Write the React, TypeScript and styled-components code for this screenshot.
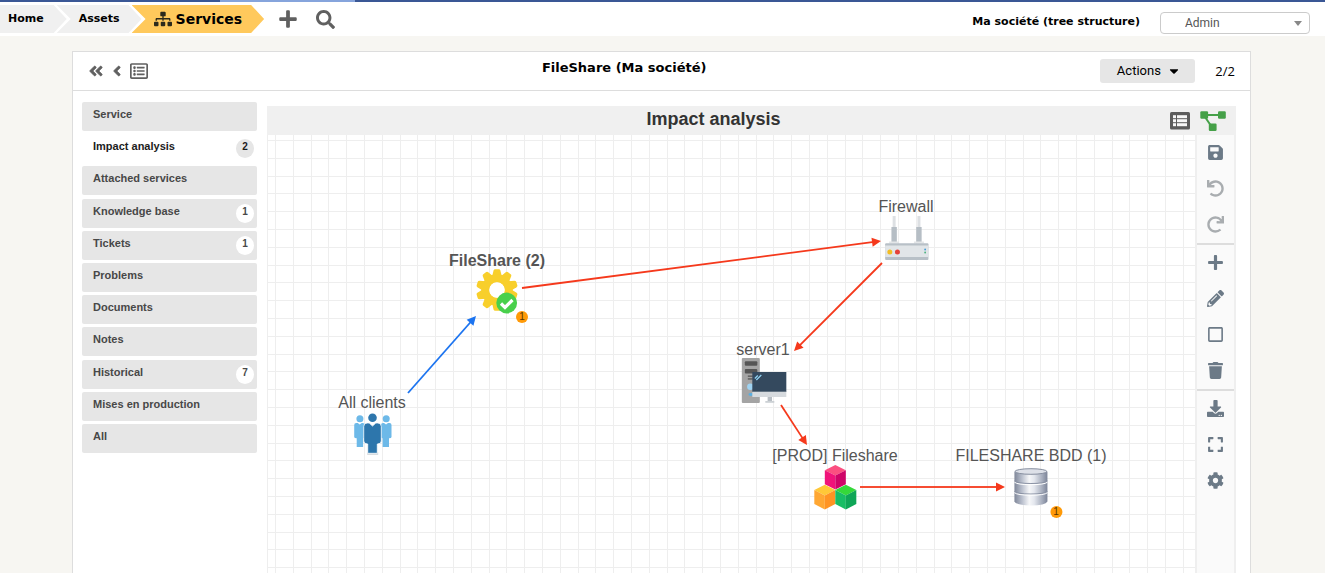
import React from 'react';
import styled, { createGlobalStyle } from 'styled-components';
import {
  FaSitemap, FaPlus, FaSearch, FaAngleDoubleLeft, FaAngleLeft, FaRegListAlt, FaCaretDown,
  FaSave, FaUndo, FaRedo, FaPencilAlt, FaRegSquare, FaTrash,
  FaDownload, FaExpand, FaCog,
} from 'react-icons/fa';

const GlobalStyle = createGlobalStyle`
  * { box-sizing: border-box; }
  body { margin: 0; background: #f7f6f2; color: #000; font-family: "Liberation Sans", Arial, sans-serif; }
  button { border: 0; padding: 0; background: none; font: inherit; color: inherit; cursor: pointer; }
  a { color: inherit; text-decoration: none; }
  ul { list-style: none; margin: 0; padding: 0; }
  h1, h2 { margin: 0; }
  svg { display: block; flex: none; }
`;

const verdana = '"DejaVu Sans", Verdana, sans-serif';

const Page = styled.div`
  display: flex;
  flex-direction: column;
  height: 100vh;
  overflow: hidden;
`;

const Strip = styled.div`
  flex: none;
  height: 2px;
  background: linear-gradient(to right, #3a5795 220px, #86a4dc 220px, #86a4dc 355px, #3a5795 355px);
`;

const TopBar = styled.header`
  flex: none;
  display: flex;
  align-items: center;
  height: 34px;
  padding-right: 15px;
  background: #fff;
`;

const Breadcrumb = styled.nav`
  display: flex;
  align-items: center;
`;

const Crumb = styled.a<{ $first?: boolean; $active?: boolean }>`
  display: flex;
  align-items: center;
  gap: 4px;
  height: 28px;
  margin-left: ${(p) => (p.$first ? 0 : '-10px')};
  padding: ${(p) => (p.$first ? '0 23px 0 8px' : '0 22px')};
  background: ${(p) => (p.$active ? '#ffc95c' : '#f0f0f0')};
  font: bold ${(p) => (p.$active ? 14 : 11)}px/26px ${verdana};
  clip-path: polygon(0 0, calc(100% - 13px) 0, 100% 50%, calc(100% - 13px) 100%, 0 100%, ${(p) => (p.$first ? '0' : '14px')} 50%);
`;

const TopActions = styled.div`
  display: flex;
  align-items: center;
  gap: 18px;
  margin-left: 14px;
  color: #606060;
`;

const Entity = styled.a`
  margin: 6px 20px 0 auto;
  font: bold 11px/16px ${verdana};
`;

const ProfileBox = styled.div`
  position: relative;
  width: 150px;
  margin-top: 8px;
  color: #888;
`;

const ProfileSelect = styled.select`
  appearance: none;
  display: block;
  width: 100%;
  height: 22px;
  padding: 0 24px;
  border: 1px solid #cbcbcb;
  border-radius: 4px;
  background: #fff;
  color: #555;
  font: 12px/20px Roboto, sans-serif;
`;

const Triangle = styled.span`
  position: absolute;
  right: 8px;
  top: 9px;
  border: 4px solid transparent;
  border-top: 5px solid #888;
  border-bottom: 0;
  pointer-events: none;
`;

const Card = styled.main`
  flex: 1;
  display: flex;
  flex-direction: column;
  margin: 15px 74px 0 72px;
  border: 1px solid #ddd;
  border-bottom: 0;
  background: #fff;
`;

const CardHeader = styled.div`
  flex: none;
  display: grid;
  grid-template-columns: auto 1fr auto;
  align-items: center;
  height: 39px;
  padding: 0 15px;
  border-bottom: 1px solid #ddd;
`;

const Pager = styled.div`
  display: flex;
  align-items: center;
  gap: 5px;
  color: #606060;
`;

const CardTitle = styled.h1`
  padding-bottom: 7px;
  text-align: center;
  font: bold 13px/18px ${verdana};
`;

const HeaderRight = styled.div`
  display: flex;
  align-items: center;
  gap: 20px;
  font: 13px/16px "Open Sans", sans-serif;
`;

const ActionsButton = styled.button`
  display: flex;
  align-items: center;
  justify-content: center;
  gap: 6px;
  width: 95px;
  height: 24px;
  padding-left: 2px;
  border-radius: 3px;
  background: #e6e6e6;
  font: 13px/16px Roboto, sans-serif;
`;

const CardBody = styled.div`
  flex: 1;
  display: flex;
  gap: 10px;
  padding: 11px 14px 0 9px;
`;

const Tabs = styled.ul`
  flex: none;
  display: flex;
  flex-direction: column;
  justify-content: space-between;
  width: 175px;
  height: 351px;
`;

const Tab = styled.a<{ $active?: boolean }>`
  display: flex;
  justify-content: space-between;
  height: 29px;
  padding: 0 3px 0 11px;
  border-radius: 2px;
  background: ${(p) => (p.$active ? '#fff' : '#e6e6e6')};
  color: ${(p) => (p.$active ? '#1c1c1c' : '#484848')};
  font-size: 11px;
  font-weight: bold;
  line-height: 25px;
`;

const TabCount = styled.span<{ $active?: boolean }>`
  width: 18px;
  height: 19px;
  margin-top: 5px;
  border-radius: 50%;
  background: ${(p) => (p.$active ? '#e6e6e6' : '#fff')};
  text-align: center;
  font-size: 10px;
  line-height: 16px;
`;

const Panel = styled.section`
  flex: 1;
  display: flex;
  flex-direction: column;
  margin-top: 4px;
  min-width: 0;
`;

const PanelHeader = styled.div`
  flex: none;
  display: flex;
  align-items: center;
  gap: 10px;
  height: 29px;
  padding-right: 10px;
  background: #f0f0f0;
  color: #555;
`;

const PanelTitle = styled.h2`
  flex: 1;
  padding-bottom: 3px;
  color: #333;
  text-align: center;
  font-size: 18px;
  line-height: 22px;
`;

const ViewButton = styled.button<{ $active?: boolean }>`
  color: ${(p) => (p.$active ? '#45a048' : '#5c5c5c')};
`;

const Workspace = styled.div`
  flex: 1;
  display: flex;
  border-left: 1px solid #eee;
`;

const Canvas = styled.div`
  position: relative;
  flex: 1;
  overflow: hidden;
`;

const Edges = styled.svg`
  position: absolute;
  inset: 0;
  width: 100%;
  height: 100%;
`;

const NodeBox = styled.div`
  position: absolute;
  display: flex;
  flex-direction: column;
  align-items: center;
  transform: translateX(-50%);
`;

const NodeLabel = styled.span<{ $bold?: boolean }>`
  margin-bottom: -2px;
  color: #555;
  font-size: 16px;
  font-weight: ${(p) => (p.$bold ? 'bold' : 'normal')};
  line-height: 20px;
  white-space: nowrap;
`;

const NodeIcon = styled.div`
  position: relative;
  width: 48px;
  height: 48px;
`;

const Alert = styled.span`
  position: absolute;
  left: 43px;
  top: 42px;
  width: 12px;
  height: 12px;
  border-radius: 50%;
  background: #ff9a08;
  color: #5a3500;
  text-align: center;
  font-size: 10px;
  line-height: 12px;
`;

const Toolbar = styled.div`
  flex: none;
  width: 41px;
  border: solid #efefef;
  border-width: 0 2px;
  background: #fafafa;
`;

const ToolGroup = styled.div`
  display: flex;
  flex-direction: column;
  & + & { border-top: 2px solid #ddd; }
`;

const Tool = styled.button`
  display: flex;
  align-items: center;
  justify-content: center;
  height: 36px;
  padding-bottom: 1px;
  color: #6c7a87;
  &:disabled { color: #a9adb0; }
`;

const GRID = 17.8;

function Grid() {
  return (
    <g fill="#eeeeee">
      {Array.from({ length: 120 }, (_, i) => (
        <rect key={'v' + i} x={Math.round(7 + i * GRID)} y={0} width={1} height="100%" />
      ))}
      {Array.from({ length: 60 }, (_, i) => (
        <rect key={'h' + i} x={0} y={Math.round(5 + i * GRID)} width="100%" height={1} />
      ))}
    </g>
  );
}

const RED = '#f5391c';
const BLUE = '#1c74f0';

const edges = [
  { from: [254, 153], to: [613, 106], color: RED },
  { from: [614, 128], to: [526, 216], color: RED },
  { from: [513, 270], to: [539, 310], color: RED },
  { from: [592, 352], to: [737, 352], color: RED },
  { from: [140, 258], to: [208, 181], color: BLUE },
];

function Edge({ from, to, color }: { from: number[]; to: number[]; color: string }) {
  const angle = (Math.atan2(to[1] - from[1], to[0] - from[0]) * 180) / Math.PI;
  const length = Math.hypot(to[0] - from[0], to[1] - from[1]);
  return (
    <g transform={`translate(${from[0]} ${from[1]}) rotate(${angle})`} fill={color}>
      <rect x={0} y={-0.9} width={length - 7} height={1.8} />
      <path d={`M${length} 0 l-9 -4.5 v9z`} />
    </g>
  );
}

function GraphGlyph() {
  return (
    <svg width="26" height="20" viewBox="0 0 26 20" fill="currentColor">
      <rect x="0.3" y="0.3" width="7.8" height="7.4" rx="1.2" />
      <rect x="18" y="0.3" width="7.8" height="7.4" rx="1.2" />
      <rect x="8.8" y="12.6" width="7.8" height="7.4" rx="1.2" />
      <path d="M7 4 H19 M5 6 L10.5 14" stroke="currentColor" strokeWidth="2" />
    </svg>
  );
}

function TableGlyph() {
  return (
    <svg width="20" height="18" viewBox="0 0 20 18">
      <rect width="20" height="17.5" rx="1.5" fill="currentColor" />
      <g fill="#f7f7f7">
        {[3.2, 7.2, 11.2].map((y) => (
          <g key={y}>
            <rect x="3" y={y} width="3" height="3" />
            <rect x="7" y={y} width="10" height="3" />
          </g>
        ))}
      </g>
    </svg>
  );
}

function GearArt() {
  return (
    <svg width="48" height="48" viewBox="0 0 48 48">
      <g transform="translate(24 21)" fill="#f8cf2b">
        {Array.from({ length: 10 }, (_, i) => (
          <path key={i} transform={`rotate(${i * 36})`} d="M-5 -13 L-3.4 -19.5 Q-3 -20.8 -1.8 -20.8 H1.8 Q3 -20.8 3.4 -19.5 L5 -13z" />
        ))}
        <circle r="11.7" fill="none" stroke="#f8cf2b" strokeWidth="8" />
        <circle r="7.6" fill="#fff" />
      </g>
      <circle cx="33.7" cy="34" r="10.4" fill="#49d04c" />
      <path d="M28 34.5 l4 4 l7.5 -7.5" fill="none" stroke="#fff" strokeWidth="3.2" />
    </svg>
  );
}

function PeopleArt() {
  const side = 'M0 14 q0 -2 2 -2 h1.5 l2 1.5 l2 -1.5 h1 q2 0 2 2 v12 q0 1.2 -1.6 1.2 v8.8 h-6.4 v-8.8 q-2.5 0 -2.5 -1.2z';
  return (
    <svg width="48" height="48" viewBox="0 0 48 48">
      <rect x="19" y="41" width="11" height="3" fill="#d9dde0" />
      <g fill="#6db9e8">
        <circle cx="11.7" cy="7.7" r="3.5" />
        <circle cx="38" cy="7.7" r="3.5" />
        <path d={side} transform="translate(6 0)" />
        <path d={side} transform="translate(43.3 0) scale(-1 1)" />
      </g>
      <circle cx="24.3" cy="6.7" r="4.3" fill="#2d76ac" />
      <path d="M15.5 15.5 q0 -3.5 3.5 -3.5 h2 l3.3 3 l3.3 -3 h2 q3.5 0 3.5 3.5 v14.5 q0 3 -4 3 v9.3 h-9.6 v-9.3 q-4 0 -4 -3z" fill="#2d76ac" stroke="#fff" strokeWidth="0.8" />
    </svg>
  );
}

function RouterArt() {
  return (
    <svg width="48" height="48" viewBox="0 0 48 48">
      {[11.7, 36.5].map((x) => (
        <g key={x}>
          <rect x={x - 1.5} y="1" width="3" height="12" fill="#dde0e3" />
          <rect x={x - 2.7} y="12" width="5.4" height="15" fill="#b6bec5" />
          <rect x={x - 5} y="26.5" width="10" height="2" fill="#e3e6e8" />
        </g>
      ))}
      <rect x="2.7" y="28.3" width="43.3" height="16.7" rx="1" fill="#b8c0c7" />
      <rect x="2.7" y="30.5" width="43.3" height="11.5" fill="#e1e5e8" />
      <circle cx="7.4" cy="37" r="2.5" fill="#f3bd23" />
      <circle cx="15" cy="37" r="2.5" fill="#e5423a" />
      <circle cx="42.7" cy="34.5" r="0.9" fill="#3d9ad6" />
      <circle cx="42.7" cy="37.5" r="0.9" fill="#48b07c" />
    </svg>
  );
}

function ServerArt() {
  return (
    <svg width="48" height="48" viewBox="0 0 48 48">
      <rect x="2.5" y="0" width="18" height="45" rx="1" fill="#a4a4a4" />
      <g fill="#555">
        <rect x="5.5" y="3.2" width="12.5" height="4.5" rx="1" />
        <rect x="5.5" y="11" width="12.5" height="4.5" rx="1" />
        <rect x="8.5" y="17.5" width="5" height="1.3" />
        <rect x="8.5" y="20.3" width="5" height="1.3" />
      </g>
      <circle cx="11" cy="28.7" r="3.2" fill="#9fd3f2" />
      <ellipse cx="11.5" cy="36.5" rx="2.4" ry="1.4" fill="#5aaee0" />
      <rect x="13" y="14" width="34" height="20" fill="#34495e" />
      <path d="M15.5 20.5 l3 -3 M17 22 l5 -5" stroke="#8fd0f0" strokeWidth="1.3" />
      <rect x="13" y="33.7" width="34" height="5.3" fill="#d6dade" />
      <rect x="28.3" y="39" width="4.4" height="4" fill="#b8bec4" />
      <rect x="26" y="43" width="9" height="1.8" fill="#ccd1d5" />
    </svg>
  );
}

function Cube({ x, y, top, left, right }: { x: number; y: number; top: string; left: string; right: string }) {
  return (
    <g transform={`translate(${x} ${y})`}>
      <path d="M0 0 L10.5 5.3 L0 10.6 L-10.5 5.3z" fill={top} />
      <path d="M-10.5 5.3 L0 10.6 V24.6 L-10.5 19.3z" fill={left} />
      <path d="M10.5 5.3 L0 10.6 V24.6 L10.5 19.3z" fill={right} />
    </g>
  );
}

function CubesArt() {
  return (
    <svg width="48" height="48" viewBox="0 0 48 48">
      <Cube x={24} y={1} top="#fb4f80" left="#f0137a" right="#cf0568" />
      <Cube x={13.5} y={20.8} top="#ffc838" left="#ffa733" right="#ff9423" />
      <Cube x={34.5} y={20.8} top="#35d83a" left="#18bd64" right="#0fa657" />
    </svg>
  );
}

function DatabaseArt() {
  return (
    <svg width="48" height="48" viewBox="0 0 48 48">
      <defs>
        <linearGradient id="steel">
          <stop offset="0" stopColor="#7f8799" />
          <stop offset="0.22" stopColor="#b7bdcb" />
          <stop offset="0.45" stopColor="#f6f7f9" />
          <stop offset="0.6" stopColor="#e4e7ee" />
          <stop offset="0.85" stopColor="#a4abbb" />
          <stop offset="1" stopColor="#7c8498" />
        </linearGradient>
      </defs>
      <path d="M7 7.5 V37.5 Q9 41.5 23.5 41.5 T40 37.5 V7.5z" fill="url(#steel)" />
      <g fill="none">
        <path d="M7 17 Q10 19.5 23.5 19.5 T40 17 M7 27.5 Q10 30 23.5 30 T40 27.5" stroke="#8a92a4" strokeWidth="1" />
        <path d="M7 18.2 Q10 20.7 23.5 20.7 T40 18.2 M7 28.7 Q10 31.2 23.5 31.2 T40 28.7" stroke="#fff" strokeWidth="1" />
      </g>
      <ellipse cx="23.5" cy="7.5" rx="16" ry="2.8" fill="#dde0e8" stroke="#858d9e" />
    </svg>
  );
}

const nodes = [
  { label: 'FileShare (2)', x: 229, y: 116, Art: GearArt, alert: 1, bold: true },
  { label: 'Firewall', x: 638, y: 62, Art: RouterArt },
  { label: 'server1', x: 495, y: 205, Art: ServerArt },
  { label: 'All clients', x: 104, y: 258, Art: PeopleArt },
  { label: '[PROD] Fileshare', x: 567, y: 311, Art: CubesArt },
  { label: 'FILESHARE BDD (1)', x: 763, y: 311, Art: DatabaseArt, alert: 1 },
];

const tabs: { label: string; count?: number; active?: boolean }[] = [
  { label: 'Service' },
  { label: 'Impact analysis', count: 2, active: true },
  { label: 'Attached services' },
  { label: 'Knowledge base', count: 1 },
  { label: 'Tickets', count: 1 },
  { label: 'Problems' },
  { label: 'Documents' },
  { label: 'Notes' },
  { label: 'Historical', count: 7 },
  { label: 'Mises en production' },
  { label: 'All' },
];

const toolGroups = [
  [
    { name: 'Save', Icon: FaSave },
    { name: 'Undo', Icon: FaUndo, disabled: true },
    { name: 'Redo', Icon: FaRedo, disabled: true },
  ],
  [
    { name: 'Add asset', Icon: FaPlus },
    { name: 'Add relation', Icon: FaPencilAlt },
    { name: 'Add group', Icon: FaRegSquare },
    { name: 'Delete', Icon: FaTrash },
  ],
  [
    { name: 'Download', Icon: FaDownload },
    { name: 'Fullscreen', Icon: FaExpand },
    { name: 'Settings', Icon: FaCog },
  ],
];

export default function App() {
  return (
    <Page>
      <GlobalStyle />
      <Strip />
      <TopBar>
        <Breadcrumb>
          <Crumb href="#" $first>Home</Crumb>
          <Crumb href="#">Assets</Crumb>
          <Crumb href="#" $active><FaSitemap size={18} color="#2c2a1c" />Services</Crumb>
        </Breadcrumb>
        <TopActions>
          <button aria-label="Add"><FaPlus size={20} /></button>
          <button aria-label="Search"><FaSearch size={19} /></button>
        </TopActions>
        <Entity href="#">Ma société (tree structure)</Entity>
        <ProfileBox>
          <ProfileSelect aria-label="Profile" defaultValue="Admin">
            <option>Admin</option>
          </ProfileSelect>
          <Triangle />
        </ProfileBox>
      </TopBar>
      <Card>
        <CardHeader>
          <Pager>
            <button aria-label="First"><FaAngleDoubleLeft size={16} stroke="currentColor" strokeWidth={20} /></button>
            <button aria-label="Previous"><FaAngleLeft size={16} stroke="currentColor" strokeWidth={20} /></button>
            <button aria-label="List"><FaRegListAlt size={18} /></button>
          </Pager>
          <CardTitle>FileShare (Ma société)</CardTitle>
          <HeaderRight>
            <ActionsButton>Actions <FaCaretDown size={14} /></ActionsButton>
            <span>2/2</span>
          </HeaderRight>
        </CardHeader>
        <CardBody>
          <Tabs>
            {tabs.map((t) => (
              <li key={t.label}>
                <Tab href="#" $active={t.active}>
                  {t.label}
                  {t.count && <TabCount $active={t.active}>{t.count}</TabCount>}
                </Tab>
              </li>
            ))}
          </Tabs>
          <Panel>
            <PanelHeader>
              <PanelTitle>Impact analysis</PanelTitle>
              <ViewButton aria-label="List view"><TableGlyph /></ViewButton>
              <ViewButton aria-label="Graph view" $active><GraphGlyph /></ViewButton>
            </PanelHeader>
            <Workspace>
              <Canvas>
                <Edges>
                  <Grid />
                  {edges.map((e, i) => <Edge key={i} {...e} />)}
                </Edges>
                {nodes.map(({ label, x, y, Art, alert, bold }) => (
                  <NodeBox key={label} style={{ left: x, top: y }}>
                    <NodeLabel $bold={bold}>{label}</NodeLabel>
                    <NodeIcon>
                      <Art />
                      {alert && <Alert>{alert}</Alert>}
                    </NodeIcon>
                  </NodeBox>
                ))}
              </Canvas>
              <Toolbar>
                {toolGroups.map((group, i) => (
                  <ToolGroup key={i}>
                    {group.map(({ name, Icon, ...rest }) => (
                      <Tool key={name} aria-label={name} {...rest}><Icon size={17} /></Tool>
                    ))}
                  </ToolGroup>
                ))}
              </Toolbar>
            </Workspace>
          </Panel>
        </CardBody>
      </Card>
    </Page>
  );
}
